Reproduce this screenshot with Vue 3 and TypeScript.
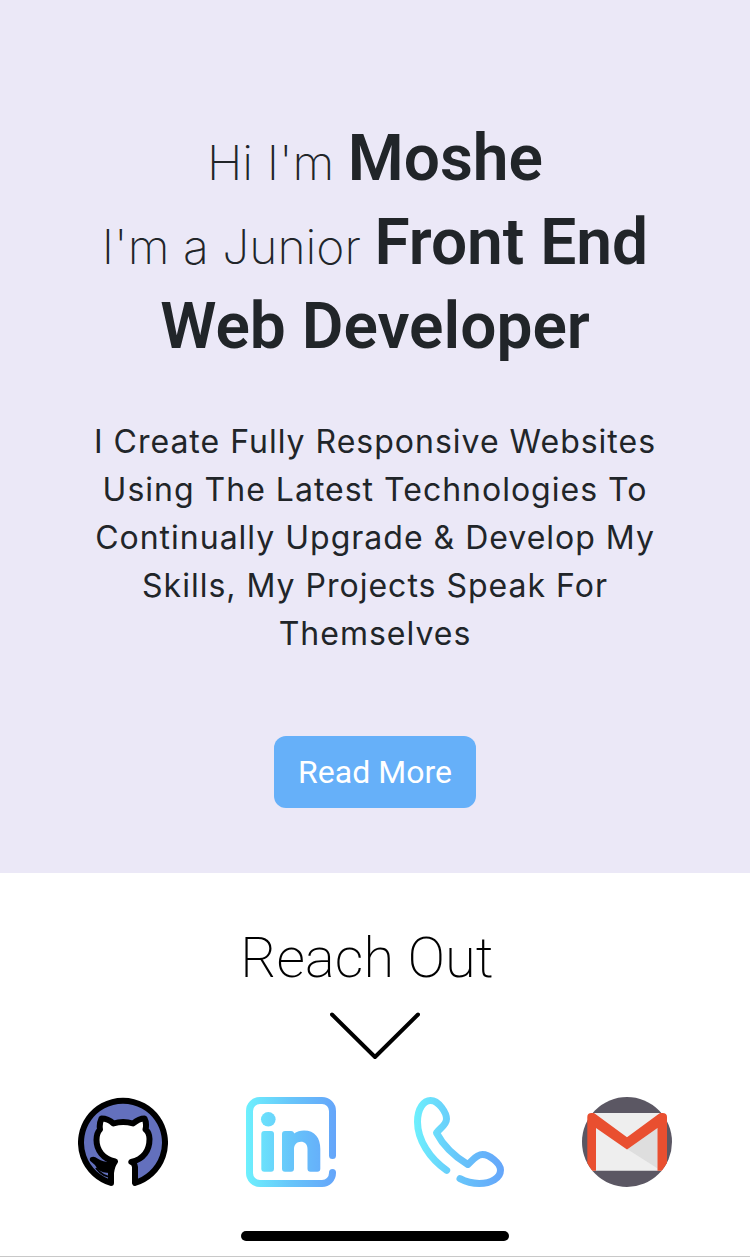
<script setup lang="ts">
const headingLead: string = "Hi I'm"
const name: string = 'Moshe'
const roleLead: string = "I'm a Junior"
const roleParts: string[] = ['Front End', 'Web Developer']
</script>

<template>
  <main class="page">
    <section class="hero">
      <h1 class="headline">
        {{ headingLead }} <strong>{{ name }}</strong><br />
        {{ roleLead }} <strong>{{ roleParts[0] }}</strong><br />
        <strong>{{ roleParts[1] }}</strong>
      </h1>
      <p class="intro">
        I Create Fully Responsive Websites Using The Latest Technologies To
        Continually Upgrade &amp; Develop My Skills, My Projects Speak For Themselves
      </p>
      <button class="more" type="button">Read More</button>
    </section>

    <section class="contact">
      <h2 class="reach">Reach Out</h2>
      <svg class="chevron" viewBox="0 0 90 48" aria-hidden="true">
        <path d="M2 2.5 45 45 88 2.5" fill="none" stroke="#000" stroke-width="4" stroke-linecap="round" stroke-linejoin="round" />
      </svg>
      <nav class="links">
        <a href="#github" aria-label="GitHub">
          <svg viewBox="0 0 90 90">
            <path
              d="M33 85.900A42 42 0 1 1 57 85.900V70Q56.500 66 53.300 65C66 62 71.500 53 71.500 42C71.500 38 70.500 35 67.500 32.500Q69 26 66.500 21.500Q61 21.500 55 26.500Q45 23.500 35.500 26.500Q30 21.500 23.500 21.500Q21 27 22 32.500C19.500 35 18.500 39 18.500 43C18.500 53 25 62 37 64.500Q34 68 33 76Z"
              fill="#6370bd" stroke="#000" stroke-width="6" stroke-linejoin="round"
            />
            <path d="M12.500 60.500Q16 58.500 19.500 61.500C26 65.500 31 65.500 37 64.500L34 76Q25 76.500 20 72.500Q18 68 13.500 65Q10.500 63 12.500 60.500Z" fill="#000" />
            <path d="M18 71Q25 80 34 80" fill="none" stroke="#000" stroke-width="2" />
          </svg>
        </a>
        <a href="#linkedin" aria-label="LinkedIn">
          <svg viewBox="0 0 90 90">
            <defs>
              <linearGradient id="frame-tone" gradientUnits="userSpaceOnUse" x1="0" y1="45" x2="90" y2="45">
                <stop offset="0" stop-color="#6df0fd" />
                <stop offset="0.5" stop-color="#67c5fa" />
                <stop offset="1" stop-color="#65a5fa" />
              </linearGradient>
            </defs>
            <path d="M86.500 58.500V14A10.500 10.500 0 0 0 76 3.500H14A10.500 10.500 0 0 0 3.500 14V76A10.500 10.500 0 0 0 14 86.500H76A10.500 10.500 0 0 0 86.500 76V75.500" fill="none" stroke="url(#frame-tone)" stroke-width="7" stroke-linecap="round" />
            <g fill="url(#frame-tone)">
              <circle cx="22.300" cy="22.300" r="7.300" />
              <rect x="15.300" y="34" width="12.700" height="40.700" rx="3" />
              <path d="M39 34H45Q48 34 48 36.500C51 34.500 54 33.500 58 33.500C69 33.500 74.300 41 74.300 52V71.700Q74.300 74.700 71.300 74.700H64.500Q61.500 74.700 61.500 71.700V52C61.500 47 58.500 44.700 55 44.700C51 44.700 48 47.500 48 52V71.700Q48 74.700 45 74.700H39Q36 74.700 36 71.700V37Q36 34 39 34Z" />
            </g>
          </svg>
        </a>
        <a href="#phone" aria-label="Phone">
          <svg viewBox="0 0 90 90">
            <defs>
              <linearGradient id="phone-tone" gradientUnits="userSpaceOnUse" x1="0" y1="45" x2="90" y2="45">
                <stop offset="0" stop-color="#6df0fd" />
                <stop offset="0.5" stop-color="#67c5fa" />
                <stop offset="1" stop-color="#65a5fa" />
              </linearGradient>
            </defs>
            <path d="M32.700 73.300C16 62 3.500 43 3.500 25C3.500 11 10 3.500 16.500 3.500C25 3.500 32.500 16 32.500 22C32.500 28 26 31 22.500 35.800Q32 54 53.800 67.500C58 64 62 57.500 68.500 57.500C75 57.500 86.500 66 86.500 73C86.500 81 77 86.500 65.300 86.500Q55 86.500 46 81.700" fill="none" stroke="url(#phone-tone)" stroke-width="7" stroke-linecap="round" stroke-linejoin="round" />
          </svg>
        </a>
        <a href="#mail" aria-label="Gmail">
          <svg viewBox="0 0 90 90">
            <circle cx="45" cy="45" r="45" fill="#5b5763" />
            <path d="M10 16H80V73.700H10Z" fill="#eee" />
            <path d="M45 52 75.700 31V71.500Z" fill="#dedede" />
            <path d="M10.300 73.700Q7.500 70 5.300 66V20Q5.300 16 9.500 16H12L45 40.300 78 16H80.500Q85 16 85 20V66Q82.500 70 79.700 73.700H75.500V31L45 52.500 14 31V73.700Z" fill="#e94f30" />
          </svg>
        </a>
      </nav>
      <div class="home-bar"></div>
    </section>
  </main>
</template>

<style>
body {
  margin: 0;
}
</style>

<style scoped>
.page {
  display: flex;
  flex-direction: column;
  min-height: 100vh;
  box-sizing: border-box;
  background: #fff;
  border-bottom: 1px solid #c8c8c8;
  font-family: Roboto, "Liberation Sans", sans-serif;
  text-align: center;
}

.hero {
  display: flex;
  flex-direction: column;
  align-items: center;
  padding: 121px 80px 65px;
  background: #ebe8f7;
  color: #212529;
}

.headline {
  margin: 0 0 45px;
  font-family: Inter, "Liberation Sans", sans-serif;
  font-size: 48px;
  font-weight: 200;
  line-height: 84px;
}

.headline strong {
  font-family: Roboto, "Liberation Sans", sans-serif;
  font-size: 64px;
  font-weight: 600;
  line-height: 64px;
}

.intro {
  margin: 0 0 78px;
  font-family: Inter, "Liberation Sans", sans-serif;
  font-size: 32px;
  line-height: 48px;
  letter-spacing: 1px;
}

.more {
  padding: 12px 24px;
  border: 0;
  border-radius: 12px;
  background: #66b0f9;
  color: #fff;
  font-family: inherit;
  font-size: 32px;
  font-weight: 400;
  line-height: 48px;
}

.contact {
  display: flex;
  flex: 1;
  flex-direction: column;
  align-items: center;
  padding: 53px 0 15px;
}

.reach {
  margin: 0;
  padding-right: 16px;
  color: #000;
  font-size: 56px;
  font-weight: 200;
  line-height: 64px;
}

.chevron {
  display: block;
  width: 90px;
  height: 48px;
  margin: 22px 0 37px;
}

.links {
  display: grid;
  grid-template-columns: repeat(4, 1fr);
  align-self: stretch;
  justify-items: center;
  padding: 0 39px;
}

.links a,
.links svg {
  display: block;
  width: 90px;
  height: 90px;
}

.home-bar {
  width: 268px;
  height: 10px;
  margin-top: auto;
  border-radius: 5px;
  background: #000;
}
</style>
